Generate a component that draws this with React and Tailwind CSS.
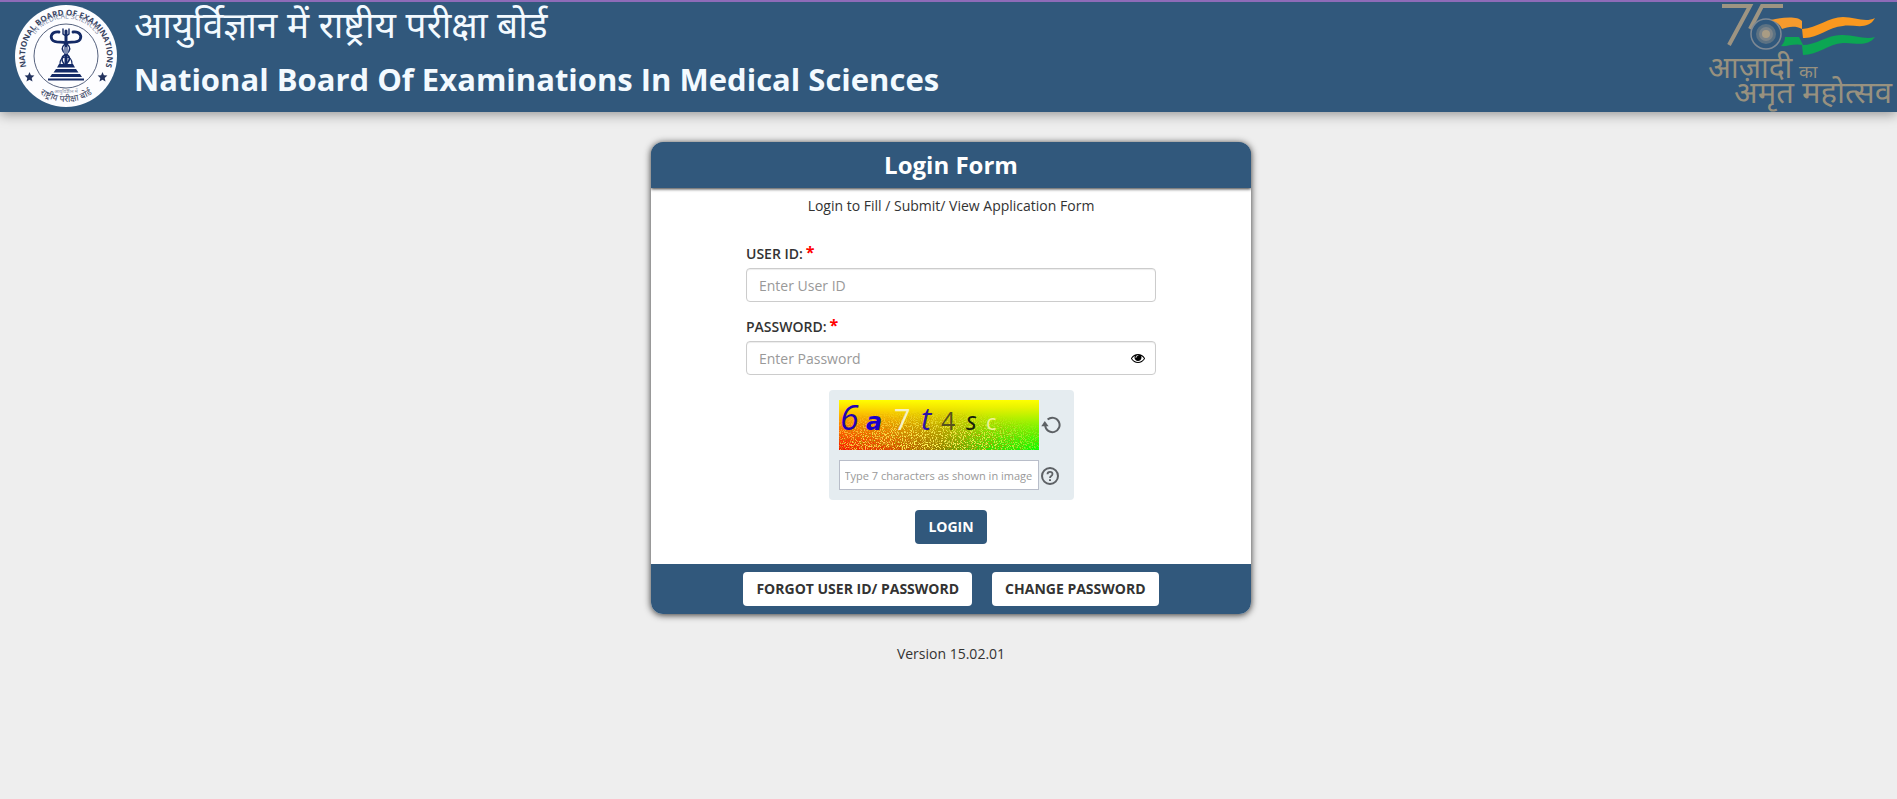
import { useState } from "react";

function BoardSeal() {
  return (
    <svg viewBox="0 0 104 104" className="size-[104px] shrink-0" role="img" aria-label="National Board of Examinations seal">
      <defs>
        <path id="seal-outer" d="M 13 65 A 41 41 0 1 1 91 65" />
        <path id="seal-inner" d="M 14.500 52 A 34 34 0 0 1 89.500 52" />
        <path id="seal-bottom" d="M 20 85 A 46 46 0 0 0 84 85" />
      </defs>
      <circle cx="52" cy="52" r="51" fill="#fdfdff" />
      <circle cx="52" cy="52" r="32" fill="none" stroke="#56627e" strokeWidth="1" />
      <g fontFamily="'Open Sans', sans-serif" textAnchor="middle">
        <text fontSize="8" fontWeight="700" fill="#38435f">
          <textPath href="#seal-outer" startOffset="50%">NATIONAL BOARD OF EXAMINATIONS</textPath>
        </text>
        <text fontSize="7" fill="#7a86a2">
          <textPath href="#seal-inner" startOffset="50%">IN MEDICAL SCIENCES</textPath>
        </text>
        <text fontSize="9" fontFamily="'Noto Sans', sans-serif" fill="#38435f">
          <textPath href="#seal-bottom" startOffset="50%">राष्ट्रीय परीक्षा बोर्ड</textPath>
        </text>
        <text x="52" y="89" fontSize="5" fontFamily="'Noto Sans', sans-serif" fill="#8b94a9">आयुर्विज्ञान में</text>
      </g>
      <path d="M15.500 68l1.400 3.300 3.500.3-2.700 2.400.8 3.500-3-1.800-3 1.800.8-3.500-2.700-2.400 3.500-.3z" fill="#24345f" />
      <path d="M88.500 68l1.400 3.300 3.500.3-2.700 2.400.8 3.500-3-1.800-3 1.800.8-3.500-2.700-2.400 3.500-.3z" fill="#24345f" />
      <g fill="none" stroke="#142a66" strokeWidth="2.800" strokeLinecap="round">
        <path d="M45 28C38 27 36 32 38 35.500C41 40 48 37 52 39C56 37 63 40 66 35.500C68 32 66 27 59 28" />
        <path d="M52 27V60" strokeWidth="3" />
        <path d="M49 25v5q3 3 6 0v-5" strokeWidth="1.400" />
        <path d="M51 40Q45 45 52 50Q59 54 52 60M53 40Q59 45 52 50Q45 54 50 60" strokeWidth="1.600" />
        <path d="M46 60Q46 53 52 53Q58 53 58 60" strokeWidth="1.200" />
      </g>
      <ellipse cx="52" cy="46.500" rx="2.500" ry="3.500" fill="#7d8bb0" />
      <path d="M45 60h14l2 3.500H43zM42 65h20l2.500 3.500h-25zM38 70h28l2 3H36zM34 74.500h36v2H34z" fill="#142a66" />
    </svg>
  );
}

function MahotsavLogo() {
  return (
    <svg viewBox="0 0 190 110" className="h-[110px] w-[190px] shrink-0" role="img" aria-label="Azadi Ka Amrit Mahotsav">
      <path d="M15 4H43L22 43" fill="none" stroke="#9d9482" strokeWidth="4" />
      <path d="M76 4H55L43 27" fill="none" stroke="#9d9482" strokeWidth="4" />
      <circle cx="59" cy="32" r="15" fill="none" stroke="#7e8994" strokeWidth="1.500" />
      <circle cx="59" cy="32" r="10" fill="#5c7283" />
      <circle cx="59" cy="32" r="7" fill="#7c8489" />
      <circle cx="59" cy="32" r="4" fill="#a99c84" />
      <path d="M64 18C76 15 91 14 95 19V27C88 23 80 25 75 27C73 22 69 20 64 18Z" fill="#f59a2d" />
      <path d="M95 27C110 26 122 15 136 15C148 15 158 21 168 16C161 29 147 22 136 24C121 25 110 37 96 36Z" fill="#f9981f" />
      <path d="M78 35H92L96 43C86 41 80 45 74 44C77 41 78 38 78 35Z" fill="#0ca653" />
      <path d="M95 43C110 43 121 32 136 33C148 33 158 38 168 35C160 46 146 40 136 41C121 42 111 53 96 53Z" fill="#0ca653" />
      <g fontFamily="'Noto Sans', sans-serif" fill="#98917f">
        <text x="1" y="76" fontSize="30">आज़ादी</text>
        <text x="92" y="76" fontSize="18">का</text>
        <text x="27" y="101" fontSize="31">अमृत महोत्सव</text>
      </g>
    </svg>
  );
}

const captchaChars = [
  { char: "6", x: 1, size: 34, color: "#2100b4", italic: true, weight: 400 },
  { char: "a", x: 27, size: 24, color: "#1a00c8", italic: true, weight: 700 },
  { char: "7", x: 55, size: 29, color: "#f6f3c8", italic: false, weight: 500 },
  { char: "t", x: 82, size: 31, color: "#2b13a6", italic: true, weight: 500 },
  { char: "4", x: 102, size: 25, color: "#57511d", italic: false, weight: 500 },
  { char: "s", x: 127, size: 25, color: "#16210c", italic: true, weight: 500 },
  { char: "c", x: 147, size: 22, color: "#f2f29a", italic: false, weight: 500 },
];

function CaptchaImage() {
  return (
    <svg viewBox="0 0 200 50" className="h-[50px] w-[200px]" role="img" aria-label="Captcha">
      <defs>
        <linearGradient id="cap-base" x1="0" y1="0" x2="1" y2="0">
          <stop offset="0" stopColor="#ff0800" />
          <stop offset=".25" stopColor="#e04000" />
          <stop offset=".5" stopColor="#8a7a00" />
          <stop offset=".75" stopColor="#30e000" />
          <stop offset="1" stopColor="#08ff00" />
        </linearGradient>
        <linearGradient id="cap-top" x1="0" y1="0" x2="0" y2="1">
          <stop offset="0" stopColor="#ffff00" />
          <stop offset=".15" stopColor="#fff400" stopOpacity=".9" />
          <stop offset="1" stopColor="#f8e000" stopOpacity="0" />
        </linearGradient>
        <radialGradient id="cap-fade" cx=".42" cy=".95" r=".75">
          <stop offset="0" stopColor="#fff" />
          <stop offset=".5" stopColor="#bbb" />
          <stop offset="1" stopColor="#000" />
        </radialGradient>
        <mask id="cap-mask">
          <rect width="200" height="50" fill="url(#cap-fade)" />
        </mask>
        <filter id="cap-noise" x="0" y="0" width="100%" height="100%">
          <feTurbulence type="fractalNoise" baseFrequency=".9" numOctaves="2" seed="4" />
          <feColorMatrix values="0 0 0 0 1  0 0 0 0 .92  0 0 0 0 .1  9 0 0 0 -4.700" />
        </filter>
        <filter id="cap-dark" x="0" y="0" width="100%" height="100%">
          <feTurbulence type="fractalNoise" baseFrequency=".9" numOctaves="2" seed="11" />
          <feColorMatrix values="0 0 0 0 .5  0 0 0 0 .3  0 0 0 0 0  0 9 0 0 -4.600" />
        </filter>
      </defs>
      <rect width="200" height="50" fill="url(#cap-base)" />
      <rect width="200" height="50" fill="url(#cap-top)" />
      <g mask="url(#cap-mask)">
        <rect width="200" height="50" filter="url(#cap-dark)" />
        <rect width="200" height="50" filter="url(#cap-noise)" />
      </g>
      {captchaChars.map((c) => (
        <text
          key={c.char}
          x={c.x}
          y="30"
          fontSize={c.size}
          fill={c.color}
          fontStyle={c.italic ? "italic" : "normal"}
          fontWeight={c.weight}
          fontFamily={c.char === "a" ? "'DejaVu Sans', sans-serif" : "'Open Sans', sans-serif"}
        >
          {c.char}
        </text>
      ))}
    </svg>
  );
}

function EyeIcon() {
  return (
    <svg viewBox="0 0 1792 1792" className="size-[14px]" fill="currentColor" aria-hidden="true">
      <path d="M1664 960q-152-236-381-353 61 104 61 225 0 185-131.500 316.500t-316.500 131.500-316.500-131.500-131.500-316.500q0-121 61-225-229 117-381 353 133 205 333.500 326.500t434.500 121.500 434.500-121.500 333.500-326.500zm-720-384q0-20-14-34t-34-14q-125 0-214.500 89.500t-89.500 214.500q0 20 14 34t34 14 34-14 14-34q0-86 61-147t147-61q20 0 34-14t14-34zm848 384q0 34-20 69-140 230-376.500 368.500t-499.500 138.500-499.500-139-376.500-368q-20-35-20-69t20-69q140-229 376.500-368t499.500-139 499.500 139 376.500 368q20 35 20 69z" />
    </svg>
  );
}

function RefreshIcon() {
  return (
    <svg viewBox="0 0 20 20" className="size-5" aria-hidden="true">
      <path d="M4.200 10.500A7.200 7.200 0 1 0 6.600 4.600" fill="none" stroke="#5d6165" strokeWidth="2" />
      <path d="M.3 11.200L3.800 6L7.600 11.200Z" fill="#5d6165" />
    </svg>
  );
}

function HelpIcon() {
  return (
    <svg viewBox="0 0 20 20" className="size-5" aria-hidden="true" fill="none" stroke="#5d6165" strokeWidth="2">
      <circle cx="9" cy="11" r="8" />
      <path d="M6.500 9.200Q6.500 6.800 9 6.800T11.500 9Q11.500 10.200 10 11.200Q9 11.900 9 13" strokeWidth="1.800" />
      <path d="M9 14.200v1.900" />
    </svg>
  );
}

function Header() {
  return (
    <header className="flex h-[112px] items-start justify-between border-t-2 border-[#8e6bb8] bg-[#31587c] shadow-[0_2px_12px_rgba(0,0,0,0.4)]">
      <div className="flex gap-4 pt-[2px] pl-[14px]">
        <BoardSeal />
        <div className="text-[#f3faff]">
          <p className="font-['Noto_Sans',sans-serif] text-[37px] leading-[40px]">आयुर्विज्ञान में राष्ट्रीय परीक्षा बोर्ड</p>
          <h1 className="text-[31px] leading-[70px] font-bold">National Board Of Examinations In Medical Sciences</h1>
        </div>
      </div>
      <MahotsavLogo />
    </header>
  );
}

function Field({ id, label, children }) {
  return (
    <div className="mb-[15px]">
      <label htmlFor={id} className="mb-1 flex h-5 items-center gap-[3px] leading-5 font-semibold">
        {label}
        <span className="h-6 text-base leading-5 font-bold text-[#f00]">*</span>
      </label>
      {children}
    </div>
  );
}

const inputClass =
  "h-[34px] w-full rounded border border-[#ccc] bg-white px-3 shadow-[inset_0_1px_1px_rgba(0,0,0,0.075)] placeholder:text-[#999]";

function App() {
  const [showPassword, setShowPassword] = useState(false);

  return (
    <div className="min-h-screen bg-[#eee] font-['Open_Sans',sans-serif] text-sm text-[#333]">
      <Header />
      <main className="flex flex-col items-center pt-[30px] pl-[5px]">
        <div className="w-full max-w-[600px] overflow-hidden rounded-xl bg-white shadow-[0_1px_7px_rgba(0,0,0,0.8)]">
          <h2 className="bg-[#31587c] text-center text-2xl leading-[46px] font-bold text-white shadow-[0_1px_3px_rgba(0,0,0,0.8)]">
            Login Form
          </h2>
          <form onSubmit={(e) => e.preventDefault()}>
            <p className="pt-2 text-center leading-5">Login to Fill / Submit/ View Application Form</p>
            <div className="mx-auto max-w-[410px] pt-7">
              <Field id="userId" label="USER ID:">
                <input id="userId" type="text" placeholder="Enter User ID" className={inputClass} />
              </Field>
              <Field id="password" label="PASSWORD:">
                <div className="relative">
                  <input
                    id="password"
                    type={showPassword ? "text" : "password"}
                    placeholder="Enter Password"
                    className={inputClass}
                  />
                  <button
                    type="button"
                    aria-label="Show password"
                    onClick={() => setShowPassword(!showPassword)}
                    className="absolute inset-y-0 right-[11px] text-black"
                  >
                    <EyeIcon />
                  </button>
                </div>
              </Field>
            </div>

            <div className="mx-auto grid w-[245px] grid-cols-[200px_20px] items-center gap-x-[2px] gap-y-[10px] rounded bg-[#e5ecf0] p-[10px]">
              <CaptchaImage />
              <button type="button" aria-label="Refresh captcha">
                <RefreshIcon />
              </button>
              <input
                type="text"
                aria-label="Captcha text"
                placeholder="Type 7 characters as shown in image"
                className="h-[30px] w-full border border-[#b8bdc9] bg-white px-[5px] text-[11px] placeholder:text-[#999]"
              />
              <button type="button" aria-label="Captcha help">
                <HelpIcon />
              </button>
            </div>

            <div className="flex justify-center pt-[10px] pb-5">
              <button type="submit" className="h-[34px] rounded bg-[#31587c] px-[13px] font-bold text-white">
                LOGIN
              </button>
            </div>
          </form>
          <div className="flex justify-center gap-5 bg-[#31587c] py-2">
            <button type="button" className="h-[34px] rounded bg-white px-[13px] font-bold">
              FORGOT USER ID/ PASSWORD
            </button>
            <button type="button" className="h-[34px] rounded bg-white px-[13px] font-bold">
              CHANGE PASSWORD
            </button>
          </div>
        </div>
        <p className="pt-[30px] leading-5">Version 15.02.01</p>
      </main>
    </div>
  );
}

export default App;
